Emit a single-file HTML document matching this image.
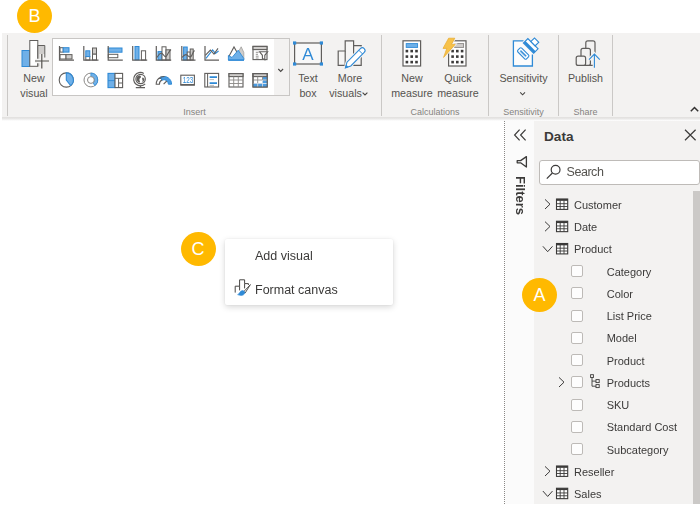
<!DOCTYPE html>
<html>
<head>
<meta charset="utf-8">
<title>Report view</title>
<style>
html,body{margin:0;padding:0;}
body{width:700px;height:509px;overflow:hidden;background:#fff;position:relative;font-family:"Liberation Sans",sans-serif;color:#4a4846;}
.abs{position:absolute;}
#ribbon{left:2px;top:33px;width:698px;height:84px;background:#f3f2f1;}
#rshadow{left:2px;top:117px;width:698px;height:4px;background:linear-gradient(#e1dfdd,#e9e8e7 45%,#f8f8f8 80%,#fff);}
.sep{position:absolute;top:35px;width:1.2px;height:80.5px;background:#cac8c6;}
.lbl{position:absolute;font-size:10.7px;line-height:14.5px;text-align:center;color:#55534f;white-space:nowrap;transform:translateX(-50%);}
.grp{position:absolute;font-size:9px;line-height:10px;color:#85837f;white-space:nowrap;transform:translateX(-50%);top:107px;}
#gallery{left:52px;top:38px;width:221px;height:56px;background:#fff;border:1px solid #c8c6c4;}
#galdrop{left:274px;top:38px;width:15px;height:56px;background:#f3f2f1;border:1px solid #c8c6c4;border-left:none;}
.ic{position:absolute;overflow:visible;}
.badge{position:absolute;width:35px;height:34px;border-radius:50%;background:#ffb900;color:#fff;font-size:18px;line-height:35.5px;text-align:center;}
#filters{left:505px;top:119px;width:29px;height:385px;background:#fbfbfb;}
#dotline{left:504px;top:119px;width:0;height:385px;border-left:1px dotted #8a8886;}
#data{left:534px;top:119px;width:166px;height:385px;background:#f3f2f1;}
.row{position:absolute;font-size:11px;line-height:14px;color:#3b3a39;white-space:nowrap;}
.cb{position:absolute;left:571px;width:10px;height:10px;border:1px solid #bdbab7;border-radius:2px;background:#fdfdfd;}
#menu{left:225px;top:239px;width:168px;height:66px;background:#fff;box-shadow:0 2px 6px rgba(0,0,0,.16),0 0 2px rgba(0,0,0,.08);border-radius:2px;}
.mi{position:absolute;font-size:12.5px;line-height:16px;color:#3b3a39;white-space:nowrap;}
</style>
</head>
<body>
<div id="wrap" style="position:absolute;left:0;top:0;width:700px;height:509px;overflow:hidden;filter:blur(0.35px);">

<!-- ribbon -->
<div id="ribbon" class="abs"></div>
<div class="sep" style="left:6.9px"></div>
<div class="sep" style="left:381px"></div>
<div class="sep" style="left:488px"></div>
<div class="sep" style="left:558px"></div>
<div class="sep" style="left:612px"></div>

<div id="gallery" class="abs"></div>
<div id="galdrop" class="abs"></div>

<div class="lbl" style="left:34px;top:71px">New<br>visual</div>
<div class="lbl" style="left:308px;top:71px">Text<br>box</div>
<div class="lbl" style="left:350px;top:71px">More<br>visuals&nbsp;&nbsp;&nbsp;</div>
<div class="lbl" style="left:412px;top:71px">New<br>measure</div>
<div class="lbl" style="left:458px;top:71px">Quick<br>measure</div>
<div class="lbl" style="left:523.5px;top:71px">Sensitivity</div>
<div class="lbl" style="left:585.5px;top:71px">Publish</div>

<div class="grp" style="left:194.5px">Insert</div>
<div class="grp" style="left:435px">Calculations</div>
<div class="grp" style="left:523.5px">Sensitivity</div>
<div class="grp" style="left:585.5px">Share</div>

<!-- panes -->
<div id="filters" class="abs"></div>
<div id="dotline" class="abs"></div>
<div id="data" class="abs"></div>
<div id="rshadow" class="abs"></div>

<div class="abs" style="left:544px;top:128px;font-size:13.6px;line-height:17px;font-weight:bold;color:#3b3a39;">Data</div>
<div class="abs" style="left:512px;top:176px;width:17px;height:40px;">
  <div style="position:absolute;left:0;top:0;transform-origin:0 0;transform:translate(17px,0) rotate(90deg);font-size:13px;line-height:17px;font-weight:bold;color:#3b3a39;white-space:nowrap;">Filters</div>
</div>

<div class="abs" style="left:539px;top:160px;width:158.5px;height:22.5px;border:1px solid #bebbb8;border-radius:3px;background:#fff;"></div>
<div class="abs" style="left:566.5px;top:165.4px;font-size:12.5px;line-height:15px;letter-spacing:-0.45px;color:#55534f;">Search</div>

<!-- scrollbar -->
<div class="abs" style="left:693px;top:191px;width:7px;height:313px;background:#cbc9c7;"></div>

<!-- rows -->
<div class="row" style="left:574px;top:197.86px">Customer</div>
<div class="row" style="left:574px;top:220.11px">Date</div>
<div class="row" style="left:574px;top:242.36px">Product</div>
<div class="row" style="left:606.7px;top:264.61px">Category</div>
<div class="cb" style="top:265.05px"></div>
<div class="row" style="left:606.7px;top:286.86px">Color</div>
<div class="cb" style="top:287.30px"></div>
<div class="row" style="left:606.7px;top:309.11px">List Price</div>
<div class="cb" style="top:309.55px"></div>
<div class="row" style="left:606.7px;top:331.36px">Model</div>
<div class="cb" style="top:331.80px"></div>
<div class="row" style="left:606.7px;top:353.61px">Product</div>
<div class="cb" style="top:354.05px"></div>
<div class="row" style="left:606.7px;top:375.86px">Products</div>
<div class="cb" style="top:376.30px"></div>
<div class="row" style="left:606.7px;top:398.11px">SKU</div>
<div class="cb" style="top:398.55px"></div>
<div class="row" style="left:606.7px;top:420.36px">Standard Cost</div>
<div class="cb" style="top:420.80px"></div>
<div class="row" style="left:606.7px;top:442.61px">Subcategory</div>
<div class="cb" style="top:443.05px"></div>
<div class="row" style="left:574px;top:464.86px">Reseller</div>
<div class="row" style="left:574px;top:487.11px">Sales</div>


<!-- context menu -->
<div id="menu" class="abs"></div>
<div class="mi" style="left:255px;top:248px">Add visual</div>
<div class="mi" style="left:255px;top:281.5px">Format canvas</div>

<!-- badges -->
<div class="badge" style="left:17px;top:-1.5px">B</div>
<div class="badge" style="left:180.5px;top:232px">C</div>
<div class="badge" style="left:522px;top:277.5px">A</div>

<!-- ICONS -->
<svg class="abs" id="icons" style="left:0;top:0" width="700" height="509" viewBox="0 0 700 509">
<g fill="none" stroke="#605e5c" stroke-width="1" stroke-linejoin="miter">
<!-- New visual -->
<rect x="22" y="50.5" width="7.5" height="16" fill="#6fb0e8" stroke="#2f8ad6"/>
<rect x="29.8" y="40.5" width="8" height="25.8" fill="#fff"/>
<rect x="37.8" y="45.5" width="7" height="20.8" fill="#cfcdcb" stroke="none"/>
<path d="M37.8 66.3V45.5H44.8V57.6" />
<path d="M35 61H49M41.8 54V68.5" stroke="#f3f2f1" stroke-width="4.6"/>
<rect x="44" y="57.8" width="2" height="9.4" fill="#f3f2f1" stroke="none"/>
<path d="M35 61H49M41.8 54V68.5" stroke="#55534f" stroke-width="1.2"/>

<!-- gallery row 1 -->
<!-- 1 stacked bar -->
<rect x="60" y="47.7" width="3.2" height="4.4" fill="#fff"/>
<rect x="63.2" y="47.7" width="5.8" height="4.4" fill="#6fb0e8" stroke="#2f8ad6"/>
<rect x="60" y="54.6" width="6" height="4.4" fill="#fff"/>
<rect x="66" y="54.6" width="6" height="4.4" fill="#cfcdcb"/>
<path d="M59.5 46V60.2H74" stroke-width="1.2"/>
<!-- 2 stacked column -->
<rect x="85.8" y="56.5" width="4" height="3.5" fill="#fff"/>
<rect x="85.8" y="50.8" width="4" height="5.8" fill="#6fb0e8" stroke="#2f8ad6"/>
<rect x="92.5" y="54" width="4" height="6" fill="#fff"/>
<rect x="92.5" y="48" width="4" height="6" fill="#cfcdcb"/>
<path d="M83.8 46V60.2H98.5" stroke-width="1.2"/>
<!-- 3 clustered bar -->
<rect x="108.3" y="48" width="13.7" height="4.2" fill="#6fb0e8" stroke="#2f8ad6"/>
<rect x="108.3" y="54.3" width="9.5" height="3.4" fill="#fff"/>
<path d="M108.2 46V60.2H122.8" stroke-width="1.2"/>
<!-- 4 clustered column -->
<rect x="135" y="46.5" width="4" height="13.3" fill="#6fb0e8" stroke="#2f8ad6"/>
<rect x="141.4" y="50.8" width="4.2" height="9.2" fill="#fff"/>
<path d="M132.7 46V60.2H147.2" stroke-width="1.2"/>
<!-- 5 line & stacked column -->
<rect x="158" y="51.6" width="4" height="8.4" fill="#6fb0e8" stroke="#2f8ad6"/>
<rect x="162" y="46.8" width="4" height="13.2" fill="#fff"/>
<rect x="166" y="49.8" width="4" height="10.2" fill="#cfcdcb"/>
<path d="M157 57.5C159 54 160.5 52.5 162 53.5S165 58 166.5 56S169 51 171 49.5" stroke-width="1.1"/>
<path d="M156.3 46V60.2H171.2" stroke-width="1.2"/>
<!-- 6 line & clustered column -->
<rect x="183.6" y="47" width="3.6" height="13" fill="#6fb0e8" stroke="#2f8ad6"/>
<rect x="187.2" y="52" width="3" height="8" fill="#fff"/>
<rect x="190.2" y="49" width="3" height="11" fill="#cfcdcb"/>
<path d="M182 57.5C184 55 185.5 54 187 55S189.5 58 191 56.5S193 51.5 194.5 50.5" stroke-width="1.1"/>
<path d="M181.8 46V60.2H195.5" stroke-width="1.2"/>
<!-- 7 line chart -->
<path d="M206 58.4L212.6 50L215.4 53.4L218.6 51" stroke="#2f8ad6" stroke-width="1.1"/>
<path d="M205.3 55.4L210.4 50L214 54L218 48.4" stroke-width="1.1"/>
<path d="M205 46V60.2H219" stroke-width="1.2"/>
<!-- 8 area chart -->
<path d="M238 52.5L241.2 46.8L243.8 52.5V59.5H238Z" fill="#cfcdcb" stroke="#a19f9d" stroke-width="0.8"/>
<path d="M228.6 57L234 47L238 54" stroke-width="1.1"/>
<path d="M228.4 55.5L232 57.5L238.2 50.2L243.8 58.5V60H228.4Z" fill="#6fb0e8" stroke="#2f8ad6" stroke-width="0.9"/>
<path d="M228.2 60.2H244" stroke="#2f8ad6" stroke-width="1.3"/>
<!-- 9 slicer -->
<rect x="253" y="46.4" width="14" height="13.2" fill="#fff" stroke-width="1.1"/>
<rect x="253" y="46.4" width="14" height="3.2" fill="#cfcdcb" stroke-width="1.1"/>
<path d="M255.8 52.3H258.6M255.8 54.3H258M255.8 56.2H258.6M255.8 58H258.6" stroke-width="0.9" stroke="#8a8886"/>
<path d="M259.6 51.8H267.6L264.8 55.3V59.8L262.4 58.4V55.3Z" fill="#fff" stroke-width="1.1"/>
</g>
<g fill="none" stroke="#605e5c" stroke-width="1" stroke-linejoin="miter">
<!-- 10 pie -->
<circle cx="66.3" cy="80" r="7.1" fill="#fff" stroke-width="1.1"/>
<path d="M66.3 80V72.9A7.1 7.1 0 0 1 70.6 85.6Z" fill="#6fb0e8" stroke="#2f8ad6" stroke-width="1.1"/>
<!-- 11 donut -->
<circle cx="90.9" cy="80" r="6.9" fill="#fff" stroke="#8a8886" stroke-width="1"/>
<path d="M90.9 74.8A5.2 5.2 0 0 1 93.9 84.3" stroke="#6fb0e8" stroke-width="3.4"/>
<path d="M90.9 73.1A6.9 6.9 0 0 1 94.9 85.6L93 82.9A3.5 3.5 0 0 0 90.9 76.5Z" stroke="#2f8ad6" stroke-width="0.8"/>
<circle cx="90.9" cy="80" r="3.4" fill="#fff" stroke="#8a8886" stroke-width="1"/>
<!-- 12 treemap -->
<rect x="108" y="73.4" width="7" height="14.2" fill="#6fb0e8" stroke="#2f8ad6" stroke-width="1.1"/>
<path d="M108 80.6H115" stroke="#2f8ad6" stroke-width="0.9"/>
<rect x="115" y="73.4" width="7.6" height="14.2" fill="#fff" stroke-width="1.1"/>
<path d="M115 78.3H122.6M118.6 78.3V87.6M118.6 83H122.6" stroke-width="1"/>
<!-- 13 globe -->
<circle cx="140.6" cy="79" r="4.7" fill="#fff" stroke-width="1.2"/>
<path d="M137.2 76.4C138.6 75 140.8 75.4 141 76.8C141.2 78 139.6 78 139.4 79.4C139.2 80.8 140.4 81 140 82.6C138 82.4 136.6 80.8 136.6 79C136.6 78 136.8 77.2 137.2 76.4Z" fill="#605e5c" stroke="none"/>
<path d="M142.6 77.4C143.6 77.6 144.2 78.6 144.4 79.6C144.2 81 143.4 82 142.4 82.6C142.2 81.6 143 80.8 142.4 79.8C142 79 142 78.2 142.6 77.4Z" fill="#605e5c" stroke="none"/>
<path d="M143.8 73.4A6.7 6.7 0 1 0 145.2 83.8" stroke-width="1.2"/>
<path d="M140.4 85.6V87.4M135.8 87.6H145" stroke-width="1.2"/>
<!-- 14 gauge -->
<path d="M156.2 84.2A7.7 7.7 0 0 1 160.65 77.2L162 80.1A4.5 4.5 0 0 0 159.4 84.2Z" fill="#fff" stroke-width="1.1"/>
<path d="M160.65 77.2A7.7 7.7 0 0 1 171.6 84.2H168.4A4.5 4.5 0 0 0 162 80.1Z" fill="#4a9be0" stroke="#2f8ad6" stroke-width="1"/>
<path d="M160.65 77.2A7.7 7.7 0 0 1 164.6 76.5" stroke-width="1.1"/>
<path d="M163.6 84.2L166.8 81" stroke-width="1.1"/>
<!-- 15 card -->
<rect x="180.8" y="75.2" width="13.6" height="9.4" fill="#fff" stroke-width="1.1"/>
<path d="M180.3 85H194.9" stroke-width="1.5"/>
<!-- 16 multi-row card -->
<rect x="204.8" y="73.4" width="13.8" height="13.6" fill="#fff" stroke-width="1.1"/>
<path d="M207.6 73.4V87" stroke-width="1"/>
<path d="M209.6 77.2H217M209.6 83.2H217" stroke="#2f8ad6" stroke-width="1.7"/>
<path d="M209.6 79.6H214M209.6 85.4H214" stroke="#a19f9d" stroke-width="0.7"/>
<!-- 17 table -->
<rect x="229" y="73.6" width="14" height="13.4" fill="#fff" stroke-width="1.1"/>
<rect x="229" y="73.6" width="14" height="3" fill="#cfcdcb" stroke-width="1.1"/>
<path d="M229 80H243M229 83.5H243M233.7 76.6V87M238.3 76.6V87" stroke-width="0.9" stroke="#8a8886"/>
<!-- 18 matrix -->
<rect x="253" y="73.6" width="14.2" height="13.4" fill="#fff" stroke-width="1.1"/>
<rect x="262.5" y="76.6" width="4.7" height="10.4" fill="#4a9be0" stroke="none"/>
<rect x="253" y="83.5" width="14.2" height="3.5" fill="#4a9be0" stroke="none"/>
<rect x="253" y="73.6" width="14.2" height="3" fill="#cfcdcb" stroke-width="1.1"/>
<path d="M253 80H267.2M253 83.5H267.2M257.7 76.6V87M262.5 76.6V87" stroke-width="0.9" stroke="#8a8886"/>
<path d="M262.5 80H267.2M262.5 83.5H267.2M253 83.5H267.2M257.7 83.5V87M262.5 80V87" stroke="#cfe3f6" stroke-width="0.8"/>
<rect x="253" y="73.6" width="14.2" height="13.4" stroke-width="1.1"/>
</g>
<text x="182.8" y="83.2" font-family="Liberation Sans, sans-serif" font-size="8.4" fill="#2f8ad6" textLength="10.6" lengthAdjust="spacingAndGlyphs">123</text>
<!-- gallery chevron -->
<path d="M278.3 69l2.4 2.4l2.4-2.4" fill="none" stroke="#484644" stroke-width="1.1"/>
<g fill="none" stroke="#605e5c" stroke-width="1.1" stroke-linejoin="miter">
<!-- text box -->
<rect x="294.6" y="43" width="26.8" height="21" fill="#f8f8f8" stroke-width="1.2"/>
<g fill="#2f8ad6" stroke="none">
<rect x="293" y="41.4" width="3.2" height="3.2"/><rect x="319.8" y="41.4" width="3.2" height="3.2"/>
<rect x="293" y="62.4" width="3.2" height="3.2"/><rect x="319.8" y="62.4" width="3.2" height="3.2"/>
</g>
<!-- more visuals -->
<path d="M338.2 65.4V51H345.2V40.8H353.6V45.6H361.2V65.4Z" fill="#f6f5f4" stroke-width="1.2"/>
<path d="M345.2 51V65.4M353.6 45.6V65.4" stroke-width="1.2"/>
<path d="M345.4 67.8L347 62.2L360.4 48.6A2.5 2.5 0 0 1 364.2 52.4L350.8 66Z" fill="#fff" stroke="#f3f2f1" stroke-width="3"/>
<path d="M345.4 67.8L347 62.2L360.4 48.6A2.5 2.5 0 0 1 364.2 52.4L350.8 66Z" fill="#fff" stroke="#2f8ad6" stroke-width="1.1"/>
<path d="M345.4 67.8L348.2 67L346.2 65Z" fill="#2f8ad6" stroke="#2f8ad6" stroke-width="0.6"/>
<path d="M358.8 50.2L362.6 54" stroke="#2f8ad6" stroke-width="1"/>
<!-- calc 1 -->
<rect x="403" y="40.8" width="17.6" height="25.2" fill="#fff" stroke-width="1.2"/>
<rect x="406.2" y="43.6" width="11.4" height="3.8" fill="#6fb0e8" stroke="#2f8ad6" stroke-width="0.9"/>
<g fill="#3b3a39" stroke="none">
<rect x="405.6" y="49.8" width="2.6" height="2.6"/><rect x="410.4" y="49.8" width="2.6" height="2.6"/><rect x="415.2" y="49.8" width="2.6" height="2.6"/>
<rect x="405.6" y="55.3" width="2.6" height="2.6"/><rect x="410.4" y="55.3" width="2.6" height="2.6"/><rect x="415.2" y="55.3" width="2.6" height="2.6"/>
<rect x="405.6" y="60.8" width="2.6" height="2.6"/><rect x="410.4" y="60.8" width="2.6" height="2.6"/><rect x="415.2" y="60.8" width="2.6" height="2.6"/>
</g>
<!-- calc 2 -->
<rect x="448.6" y="40.8" width="17.4" height="25.2" fill="#fff" stroke-width="1.2"/>
<rect x="454.6" y="43.6" width="9" height="3.8" fill="#cfcdcb" stroke="#8a8886" stroke-width="0.9"/>
<g fill="#3b3a39" stroke="none">
<rect x="451.3" y="49.8" width="2.6" height="2.6"/><rect x="456" y="49.8" width="2.6" height="2.6"/><rect x="460.8" y="49.8" width="2.6" height="2.6"/>
<rect x="451.3" y="55.3" width="2.6" height="2.6"/><rect x="456" y="55.3" width="2.6" height="2.6"/><rect x="460.8" y="55.3" width="2.6" height="2.6"/>
<rect x="451.3" y="60.8" width="2.6" height="2.6"/><rect x="456" y="60.8" width="2.6" height="2.6"/><rect x="460.8" y="60.8" width="2.6" height="2.6"/>
</g>
<path d="M448.6 38.2H454.8L451.4 44.4H455.2L443.6 57.4L446.8 48.4H443L448.6 38.2Z" fill="#f7c24a" stroke="#f3f2f1" stroke-width="2.2"/>
<path d="M448.6 38.2H454.8L451.4 44.4H455.2L443.6 57.4L446.8 48.4H443L448.6 38.2Z" fill="#f7c24a" stroke="#e8a92a" stroke-width="0.7"/>
<!-- sensitivity -->
<path d="M513.4 40.8H532.4V66H513.4Z" fill="#fcfcfc" stroke="none"/>
<path d="M523.6 40.8H513.4V66H532.4V54.6" fill="none" stroke="#2f8ad6" stroke-width="1.3"/>
<g transform="translate(530.7,46) rotate(45)">
<rect x="-6.1" y="7.9" width="12.2" height="5.4" rx="1.3" fill="#fff" stroke="#2f8ad6" stroke-width="1.1"/>
<rect x="-4" y="9.8" width="8" height="1.6" rx="0.6" fill="#2f8ad6" stroke="#9cc8ee" stroke-width="0.7"/>
<rect x="-7.2" y="-3.2" width="14.4" height="6.2" fill="#fff" stroke="#f3f2f1" stroke-width="2.6"/>
<rect x="-7.2" y="-3.2" width="14.4" height="6.2" fill="#fff" stroke="#2f8ad6" stroke-width="1.1"/>
<rect x="-7.2" y="0.2" width="14.4" height="2.8" fill="#2f8ad6" stroke="none"/>
<rect x="-3" y="-8.4" width="6" height="5.2" fill="#fff" stroke="#2f8ad6" stroke-width="1.1"/>
</g>
<!-- sensitivity chevron -->
<path d="M520.2 92.4l2.4 2.4l2.4-2.4" stroke="#484644" stroke-width="1.1"/>
<!-- more visuals chevron -->
<path d="M362.6 92.6l2.4 2.4l2.4-2.4" stroke="#484644" stroke-width="1.1"/>
<!-- publish -->
<rect x="585.8" y="40.8" width="9.2" height="24.6" rx="2" fill="#f3f2f1" stroke-width="1.2"/>
<rect x="581" y="48.4" width="9.4" height="17" rx="2" fill="#f3f2f1" stroke-width="1.2"/>
<rect x="576.2" y="56.2" width="9.4" height="9.2" rx="2" fill="#f3f2f1" stroke-width="1.2"/>
<path d="M594.4 67.8V54M589 59.6L594.4 54L599.8 59.6" stroke="#f3f2f1" stroke-width="3.4"/>
<path d="M594.4 67.8V54M589 59.6L594.4 54L599.8 59.6" stroke="#2f8ad6" stroke-width="1.1"/>
<!-- collapse caret -->
<path d="M690.8 111.2L694.5 107.5L698.2 111.2" stroke="#323130" stroke-width="1.5"/>
</g>
<text x="308" y="60" font-family="Liberation Sans, sans-serif" font-size="17" fill="#2f8ad6" text-anchor="middle">A</text>
<g fill="none" stroke="#3b3a39" stroke-width="1.1">
<!-- « -->
<path d="M519.6 129.6L514.6 135L519.6 140.4M525.6 129.6L520.6 135L525.6 140.4" stroke-width="1.2"/>
<!-- funnel -->
<path d="M526.4 156.6V167L520.6 162.8H517.2V160.6H520.6Z" stroke-width="1.3" stroke-linejoin="round"/>
<!-- X -->
<path d="M685 129.8L695.6 140.2M695.6 129.8L685 140.2" stroke-width="1.2"/>
<!-- search -->
<circle cx="555.6" cy="169.8" r="4.4" stroke-width="1.2"/>
<path d="M552.4 173L546.8 178.6" stroke-width="1.2"/>
</g>
<g fill="none" stroke="#3b3a39" stroke-width="1">
<rect x="556.5" y="199.0" width="11.2" height="10.4" fill="#fff" stroke-width="1.1"/><path d="M556.5 199.9H567.7" stroke-width="1.9"/><path d="M556.5 203.7H567.7M556.5 206.5H567.7M560.2 200.5V209.4M564 200.5V209.4" stroke-width="0.9"/>
<path d="M545 199.39999999999998L550 204.2L545 209.0"/>
<rect x="556.5" y="221.25" width="11.2" height="10.4" fill="#fff" stroke-width="1.1"/><path d="M556.5 222.15H567.7" stroke-width="1.9"/><path d="M556.5 225.95H567.7M556.5 228.75H567.7M560.2 222.75V231.65M564 222.75V231.65" stroke-width="0.9"/>
<path d="M545 221.64999999999998L550 226.45L545 231.25"/>
<rect x="556.5" y="243.5" width="11.2" height="10.4" fill="#fff" stroke-width="1.1"/><path d="M556.5 244.4H567.7" stroke-width="1.9"/><path d="M556.5 248.2H567.7M556.5 251.0H567.7M560.2 245.0V253.9M564 245.0V253.9" stroke-width="0.9"/>
<path d="M542.9000000000001 246.3L547.7 251.7L552.5 246.3"/>
<path d="M559 377.4L564 382.2L559 387.0"/>
<rect x="590.6" y="374.70" width="2.8" height="2.8" stroke-width="0.9"/>
<path d="M592 377.50V386.20H596M592 381.10H596" stroke-width="0.9"/>
<rect x="596" y="379.60" width="3.2" height="3" stroke-width="0.9"/>
<rect x="596" y="384.60" width="3.2" height="3" stroke-width="0.9"/>
<rect x="556.5" y="466.0" width="11.2" height="10.4" fill="#fff" stroke-width="1.1"/><path d="M556.5 466.9H567.7" stroke-width="1.9"/><path d="M556.5 470.7H567.7M556.5 473.5H567.7M560.2 467.5V476.4M564 467.5V476.4" stroke-width="0.9"/>
<path d="M545 466.4L550 471.2L545 476.0"/>
<rect x="556.5" y="488.25" width="11.2" height="10.4" fill="#fff" stroke-width="1.1"/><path d="M556.5 489.15H567.7" stroke-width="1.9"/><path d="M556.5 492.95H567.7M556.5 495.75H567.7M560.2 489.75V498.65M564 489.75V498.65" stroke-width="0.9"/>
<path d="M542.9000000000001 491.05L547.7 496.45L552.5 491.05"/>
</g>
<g fill="none" stroke="#484644" stroke-width="1">
<path d="M235.2 292.6V286.2H239.6V279.8H244.6V283.6H248.4V285"/>
<path d="M239.6 286.2V290.4M244.6 283.6V288.4"/>
<path d="M250.4 284.6L243.6 291.8L245 293.2Z" fill="#fff" stroke-width="0.9"/>
<path d="M244.8 292.6C244.6 295.4 241 296.2 237.6 294.6C239.8 294 239.6 291 242.4 290.6C243.6 290.6 244.8 291.4 244.8 292.6Z" fill="#2f8ad6" stroke="#2f8ad6" stroke-width="0.6"/>
</g>
<!--END-->
</svg>

</div>
</body>
</html>
